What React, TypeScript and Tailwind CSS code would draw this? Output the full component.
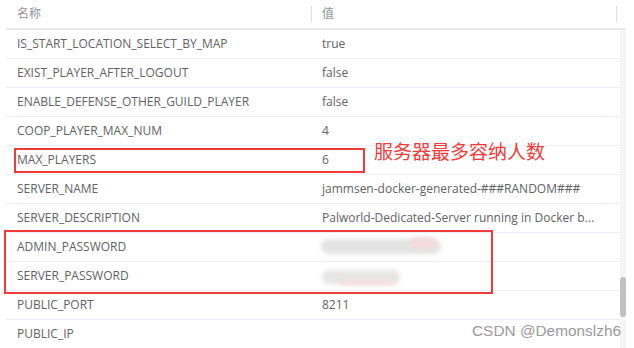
import React from 'react';

const rows: [string, string][] = [
  ['IS_START_LOCATION_SELECT_BY_MAP', 'true'],
  ['EXIST_PLAYER_AFTER_LOGOUT', 'false'],
  ['ENABLE_DEFENSE_OTHER_GUILD_PLAYER', 'false'],
  ['COOP_PLAYER_MAX_NUM', '4'],
  ['MAX_PLAYERS', '6'],
  ['SERVER_NAME', 'jammsen-docker-generated-###RANDOM###'],
  ['SERVER_DESCRIPTION', 'Palworld-Dedicated-Server running in Docker b...'],
  ['ADMIN_PASSWORD', ''],
  ['SERVER_PASSWORD', ''],
  ['PUBLIC_PORT', '8211'],
  ['PUBLIC_IP', ''],
];

const font = { fontFamily: '"Open Sans", "Noto Sans CJK SC", sans-serif' };

export default function App() {
  return (
    <div className="relative w-[634px] h-[348px] overflow-hidden bg-white" style={font}>
      <div className="ml-[6px] w-[620px]">
        {/* header */}
        <div className="flex h-[30px] border-b-2 border-[#e9e9e9] text-[12px] text-[#909399]">
          <div className="w-[305px] flex items-center pl-[11px]">名称</div>
          <div className="w-[1px] h-[16px] mt-[6px] bg-[#dcdfe6]" />
          <div className="flex-1 flex items-center pl-[10px]">值</div>
          <div className="w-[1px] h-[16px] mt-[6px] mr-[9px] bg-[#dcdfe6]" />
        </div>
        {/* body */}
        <div className="flex">
          <div className="w-[614px]">
            {rows.map(([name, value]) => (
              <div
                key={name}
                className="flex h-[29px] border-b border-[#ebeef5] text-[12px] text-[#606266]"
              >
                <div className="w-[305px] flex items-center pl-[11px] whitespace-nowrap">{name}</div>
                <div className="flex-1 flex items-center pl-[11px] whitespace-nowrap overflow-hidden">
                  {value}
                </div>
              </div>
            ))}
          </div>
          <div className="w-[6px] bg-[#f5f5f5] relative">
            <div className="absolute left-0 top-[247px] w-[6px] h-[40px] rounded-full bg-[#c1c1c1]" />
          </div>
        </div>
      </div>

      {/* blurred secrets */}
      <div className="absolute left-[321px] top-[239px] w-[120px] h-[15px] bg-[#e4e4e4] blur-[2px] rounded-full" />
      <div className="absolute left-[410px] top-[237px] w-[26px] h-[12px] bg-[#f3dcdc] blur-[2px] rounded-full" />
      <div className="absolute left-[322px] top-[270px] w-[78px] h-[14px] bg-[#e6e6e6] blur-[2px] rounded-full" />
      <div className="absolute left-[340px] top-[279px] w-[55px] h-[6px] bg-[#f5dede] blur-[2px] rounded-full" />

      {/* annotations */}
      <div className="absolute left-[14px] top-[148px] w-[351px] h-[25px] border-2 border-[#f23a3a]" />
      <div className="absolute left-[374px] top-[141px] text-[19px] leading-[22px] text-[#f23a3a] whitespace-nowrap">
        服务器最多容纳人数
      </div>
      <div className="absolute left-[4px] top-[230px] w-[489px] h-[64px] border-2 border-[#f23a3a]" />

      <div
        className="absolute left-[472px] top-[321px] text-[15.4px] leading-[20px] text-[#9a9a9a] whitespace-nowrap"
        style={{ fontFamily: '"Liberation Sans", Arial, sans-serif' }}
      >
        CSDN @Demonslzh6
      </div>
    </div>
  );
}
